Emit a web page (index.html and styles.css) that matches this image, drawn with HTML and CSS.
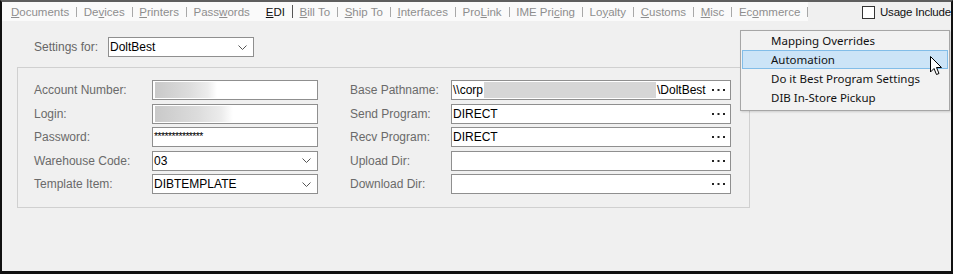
FILE: index.html
```html
<!DOCTYPE html>
<html lang="en">
<head>
    <meta charset="UTF-8">
    <title>EDI Settings</title>
    <link rel="stylesheet" href="styles.css">
</head>
<body>
<div class="window">

    <div class="topbar">
        <div class="tabs">
            <span class="tab"><u>D</u>ocuments</span><span class="sep"></span>
            <span class="tab">De<u>v</u>ices</span><span class="sep"></span>
            <span class="tab"><u>P</u>rinters</span><span class="sep"></span>
            <span class="tab">Pass<u>w</u>ords</span>
            <span class="tab active"><u>E</u>DI</span><span class="sep dark"></span>
            <span class="tab"><u>B</u>ill To</span><span class="sep"></span>
            <span class="tab"><u>S</u>hip To</span><span class="sep"></span>
            <span class="tab"><u>I</u>nterfaces</span><span class="sep"></span>
            <span class="tab">Pro<u>L</u>ink</span><span class="sep"></span>
            <span class="tab">IME Pri<u>c</u>ing</span><span class="sep"></span>
            <span class="tab">Lo<u>y</u>alty</span><span class="sep"></span>
            <span class="tab"><u>C</u>ustoms</span><span class="sep"></span>
            <span class="tab"><u>M</u>isc</span><span class="sep"></span>
            <span class="tab">Ec<u>o</u>mmerce</span><span class="sep"></span>
        </div>
        <label class="usage"><span class="checkbox"></span>Usage Include</label>
    </div>

    <div class="settings-row">
        <span class="settings-label">Settings for:</span>
        <div class="field combo settings-combo">
            <span class="value">DoltBest</span>
            <svg class="chevron" width="9" height="5" viewBox="0 0 9 5"><polyline points="0.5,0.5 4.5,4.5 8.5,0.5" fill="none" stroke="#555" stroke-width="1"/></svg>
        </div>
    </div>

    <div class="group">
        <div class="form-grid">
            <span class="lbl">Account Number:</span>
            <div class="field"><span class="blur blur-short"></span></div>
            <span></span>
            <span class="lbl">Base Pathname:</span>
            <div class="field browse">
                <span class="value">\\corp</span><span class="blur-block"></span><span class="value">\DoltBest</span>
                <svg class="dots" width="13" height="2" viewBox="0 0 13 2"><rect x="0" width="2" height="2" fill="#222"/><rect x="5.5" width="2" height="2" fill="#222"/><rect x="11" width="2" height="2" fill="#222"/></svg>
            </div>

            <span class="lbl">Login:</span>
            <div class="field"><span class="blur blur-long"></span></div>
            <span></span>
            <span class="lbl">Send Program:</span>
            <div class="field browse">
                <span class="value">DIRECT</span>
                <svg class="dots" width="13" height="2" viewBox="0 0 13 2"><rect x="0" width="2" height="2" fill="#222"/><rect x="5.5" width="2" height="2" fill="#222"/><rect x="11" width="2" height="2" fill="#222"/></svg>
            </div>

            <span class="lbl">Password:</span>
            <div class="field"><span class="value stars">**************</span></div>
            <span></span>
            <span class="lbl">Recv Program:</span>
            <div class="field browse">
                <span class="value">DIRECT</span>
                <svg class="dots" width="13" height="2" viewBox="0 0 13 2"><rect x="0" width="2" height="2" fill="#222"/><rect x="5.5" width="2" height="2" fill="#222"/><rect x="11" width="2" height="2" fill="#222"/></svg>
            </div>

            <span class="lbl">Warehouse Code:</span>
            <div class="field combo">
                <span class="value">03</span>
                <svg class="chevron" width="9" height="5" viewBox="0 0 9 5"><polyline points="0.5,0.5 4.5,4.5 8.5,0.5" fill="none" stroke="#555" stroke-width="1"/></svg>
            </div>
            <span></span>
            <span class="lbl">Upload Dir:</span>
            <div class="field browse">
                <svg class="dots" width="13" height="2" viewBox="0 0 13 2"><rect x="0" width="2" height="2" fill="#222"/><rect x="5.5" width="2" height="2" fill="#222"/><rect x="11" width="2" height="2" fill="#222"/></svg>
            </div>

            <span class="lbl">Template Item:</span>
            <div class="field combo">
                <span class="value">DIBTEMPLATE</span>
                <svg class="chevron" width="9" height="5" viewBox="0 0 9 5"><polyline points="0.5,0.5 4.5,4.5 8.5,0.5" fill="none" stroke="#555" stroke-width="1"/></svg>
            </div>
            <span></span>
            <span class="lbl">Download Dir:</span>
            <div class="field browse">
                <svg class="dots" width="13" height="2" viewBox="0 0 13 2"><rect x="0" width="2" height="2" fill="#222"/><rect x="5.5" width="2" height="2" fill="#222"/><rect x="11" width="2" height="2" fill="#222"/></svg>
            </div>
        </div>
    </div>

    <!-- popup menu over the form -->
    <ul class="menu">
        <li>Mapping Overrides</li>
        <li class="hover">Automation</li>
        <li>Do it Best Program Settings</li>
        <li>DIB In-Store Pickup</li>
    </ul>

    <svg class="cursor" width="13" height="20" viewBox="0 0 13 20">
        <path d="M0.5 0.5 L0.5 16 L4 12.5 L6.5 18.5 L9 17.5 L6.5 11.5 L11.5 11.5 Z" fill="#fff" stroke="#000" stroke-width="1" stroke-linejoin="round"/>
    </svg>

</div>
</body>
</html>
```

FILE: styles.css
```css
* {
    box-sizing: border-box;
}

body {
    margin: 0;
    background: #f0f0f0;
    font-family: 'Liberation Sans', Arial, sans-serif;
    font-size: 12px;
}

.window {
    position: relative;
    width: 953px;
    height: 274px;
    background: #f0f0f0;
    border-top: 2px solid #5e5e5e;
    border-left: 2px solid #111;
    border-right: 2px solid #111;
    border-bottom: 3px solid #111;
    overflow: hidden;
}

/* tab strip */
.topbar {
    display: flex;
    height: 19px;
}

.tabs {
    display: flex;
    align-items: center;
    width: 806px;
    height: 19px;
    background: #fafafa;
    padding-left: 2px;
    font-size: 11.5px;
    color: #8e8e8e;
    white-space: nowrap;
}

.tab {
    padding: 0 7px;
}

.tab.active {
    color: #111;
    padding: 0 7px 0 9px;
}

.sep {
    width: 1px;
    height: 10px;
    background: #a8a8a8;
}

.sep.dark {
    background: #555;
    height: 13px;
}

.usage {
    display: flex;
    align-items: center;
    margin-left: 54px;
    margin-top: 1px;
    color: #111;
    font-size: 11.5px;
    letter-spacing: -0.2px;
    white-space: nowrap;
}

.checkbox {
    width: 13px;
    height: 13px;
    background: #fff;
    border: 1px solid #333;
    margin-right: 5px;
}

/* settings for */
.settings-row {
    display: flex;
    align-items: center;
    margin-top: 16px;
    padding-left: 32px;
}

.settings-label {
    width: 74px;
    color: #666;
}

.settings-combo {
    width: 146px;
    height: 21px;
    border-color: #7a7a7a;
}

/* group box */
.group {
    margin: 10px 0 0 15px;
    width: 733px;
    height: 141px;
    border: 1px solid #d0d0d0;
    padding: 12px 0 0 16px;
}

.form-grid {
    display: grid;
    grid-template-columns: 118px 166px 32px 101px 280px;
    grid-auto-rows: 20px;
    row-gap: 3.5px;
    align-items: center;
}

.lbl {
    color: #6a6a6a;
}

.field {
    position: relative;
    display: flex;
    align-items: center;
    height: 20px;
    background: #fff;
    border: 1px solid #8f8f8f;
    padding-left: 1px;
    color: #000;
    overflow: hidden;
}

.value {
    white-space: nowrap;
}

.stars {
    font-size: 10.5px;
    letter-spacing: -0.6px;
    margin-top: -3px;
}

.combo .chevron,
.browse .dots {
    margin-left: auto;
}

.combo .chevron {
    margin-right: 6px;
}

.browse .dots {
    margin-right: 5px;
}

.blur {
    height: 16px;
    margin-left: 1px;
    background: linear-gradient(to right, #c9c9c9, #dcdcdc 55%, #ececec 85%, #fff);
}

.blur-short {
    width: 62px;
}

.blur-long {
    width: 78px;
}

.blur-block {
    width: 172px;
    height: 16px;
    background: #d6d6d6;
    margin: 0 1px 0 1px;
}

/* popup menu */
.menu {
    position: absolute;
    left: 738px;
    top: 28px;
    width: 210px;
    height: 81px;
    margin: 0;
    padding: 0 0 0 1px;
    list-style: none;
    background: #f2f2f2;
    border: 1px solid #a6a6a6;
    box-shadow: 1px 1px 2px rgba(0, 0, 0, 0.15);
    font-family: 'Noto Sans', 'Open Sans', sans-serif;
    font-size: 11.5px;
    color: #111;
}

.menu li {
    height: 19px;
    line-height: 17px;
    padding-left: 28px;
    border: 1px solid transparent;
    margin-right: 1px;
}

.menu li.hover {
    background: #cce4f7;
    border-color: #82bde8;
}

.cursor {
    position: absolute;
    left: 928px;
    top: 54px;
}
```
